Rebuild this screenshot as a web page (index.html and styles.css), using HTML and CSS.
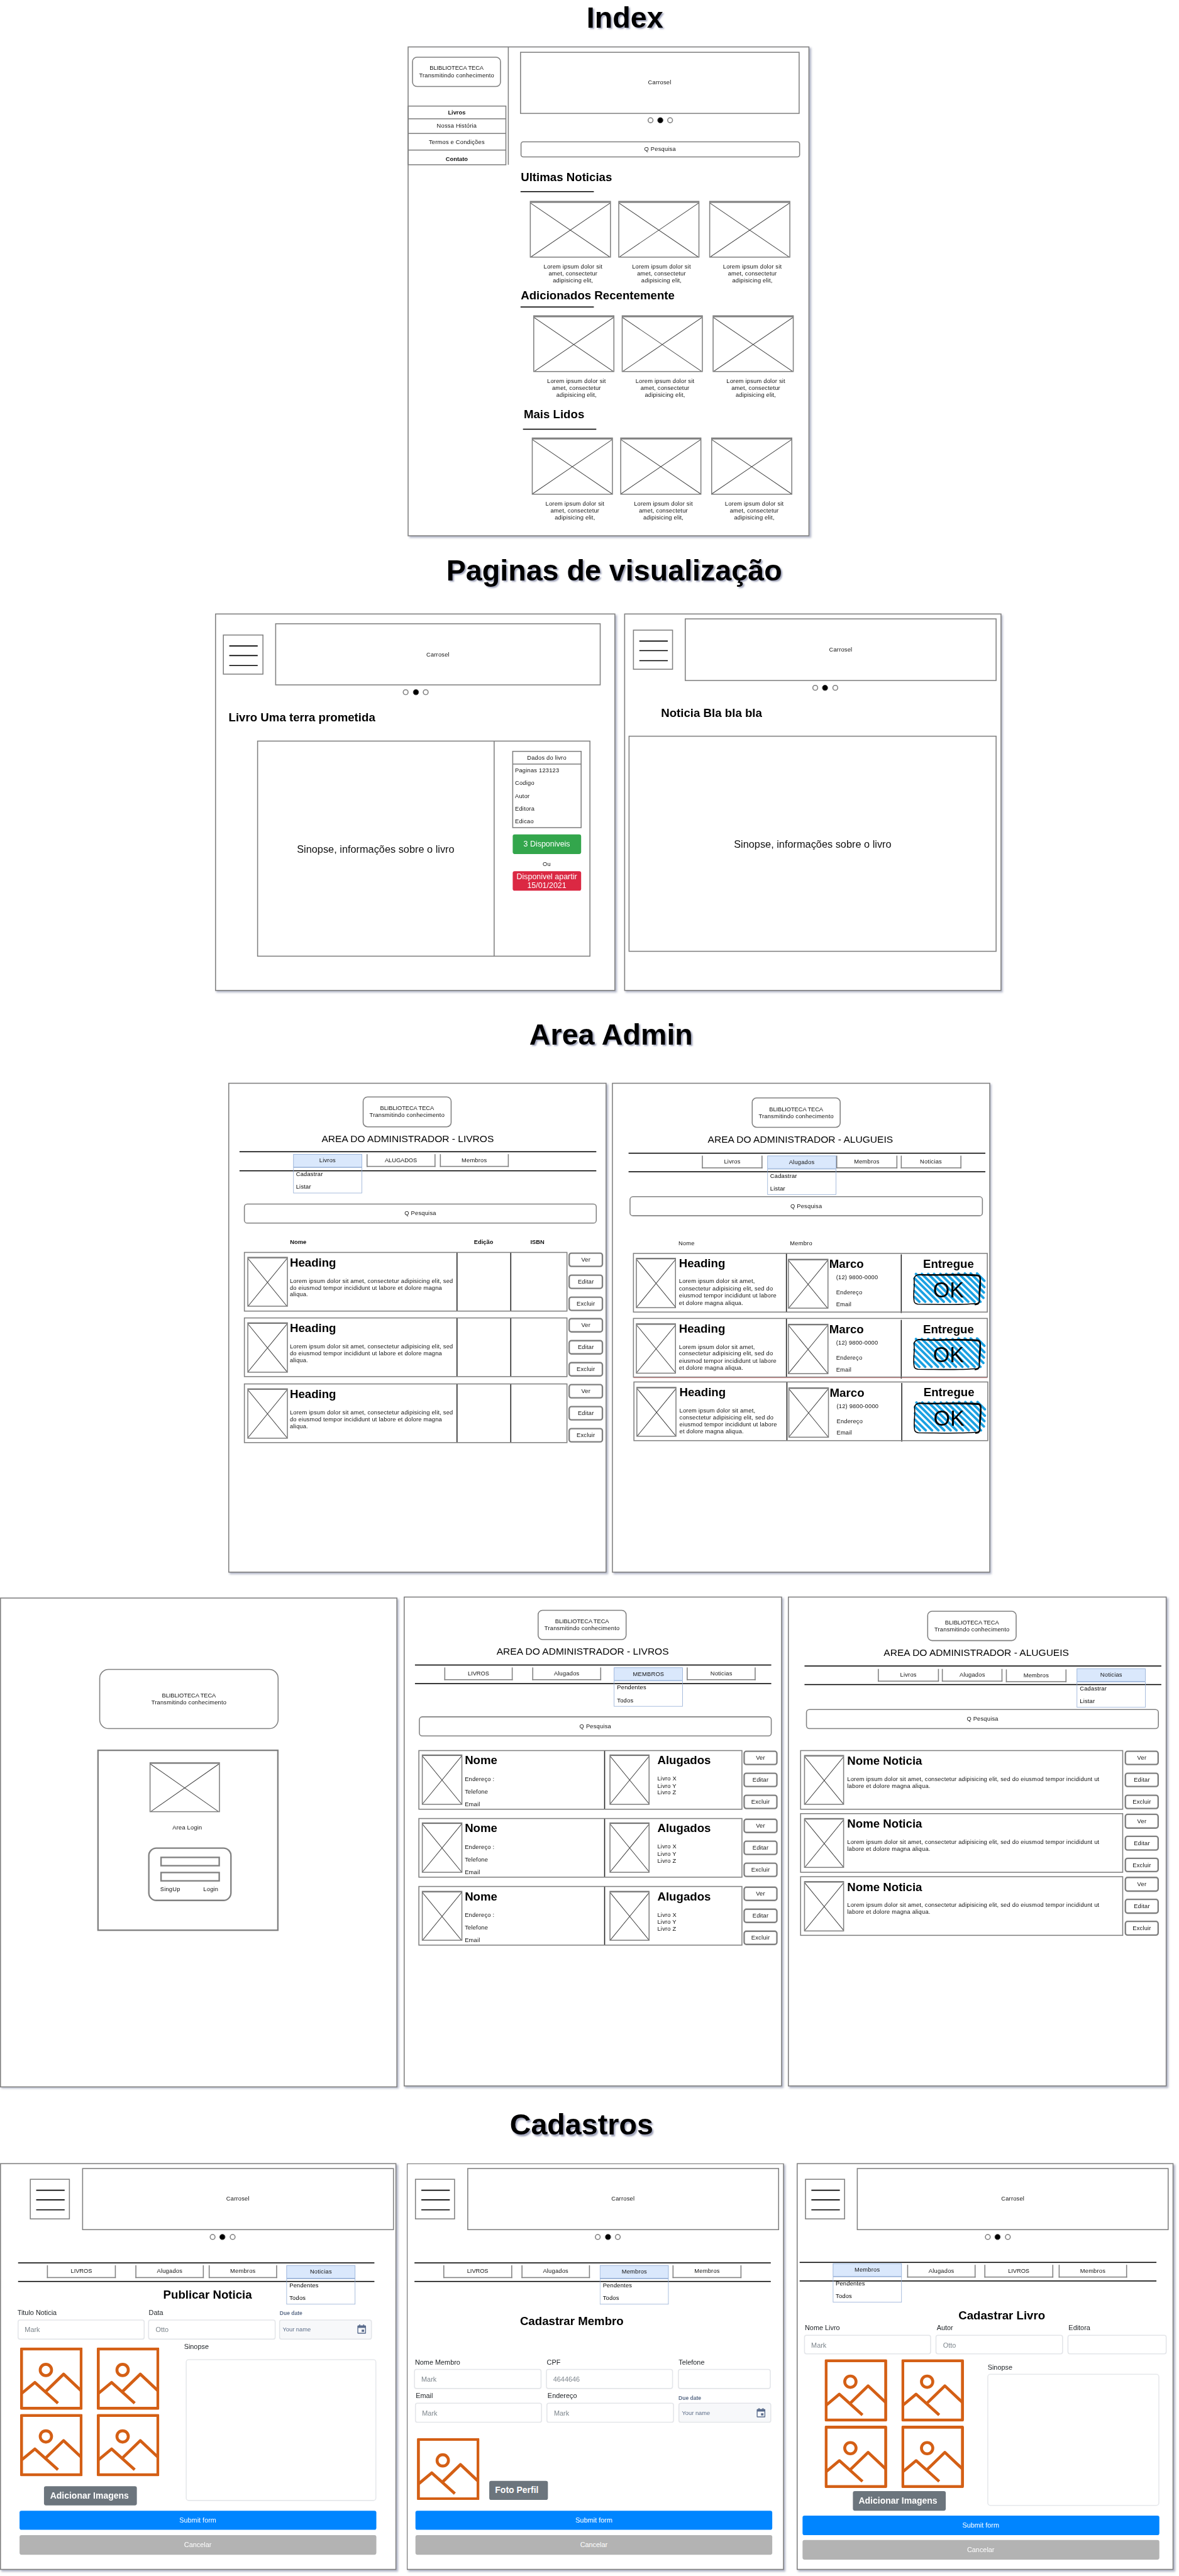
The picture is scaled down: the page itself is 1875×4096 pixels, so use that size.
FILE: index.html
```html
<!DOCTYPE html>
<html lang="pt-BR">
<head>
<meta charset="utf-8">
<title>Biblioteca Teca - Wireframes</title>
<link rel="stylesheet" href="styles.css">
</head>
<body>
<svg class="defs" aria-hidden="true">
  <symbol id="cross" viewBox="0 0 100 100" preserveAspectRatio="none"><path d="M0 0L100 100M100 0L0 100" fill="none" stroke="#444" stroke-width="1.3" vector-effect="non-scaling-stroke"/></symbol>
  <symbol id="menu" viewBox="0 0 80 80" preserveAspectRatio="none"><path d="M12 22.3H70M12 41.8H70M12 62.2H70" stroke="#000" stroke-width="2"/></symbol>
  <symbol id="photo" viewBox="0 0 128 127.5" preserveAspectRatio="none"><g fill="none" stroke="#d45f15" stroke-width="6"><rect x="3" y="3" width="122" height="121.5" stroke-linejoin="round"/><circle cx="52.8" cy="46" r="11.6"/><path d="M4 93.5L30.3 71.5L77.5 114M53 89.5L89 54.5L125 88.5" stroke-linejoin="round"/></g></symbol>
  <symbol id="calendar" viewBox="0 0 18 20"><path d="M4 0h2v2h6V0h2v2h2a2 2 0 0 1 2 2v13a2 2 0 0 1-2 2H2a2 2 0 0 1-2-2V4a2 2 0 0 1 2-2h2zM2 7v10h14V7zM9 10.5h5V15H9z" fill="#596b8c" fill-rule="evenodd"/></symbol>
  <symbol id="ok" viewBox="0 0 154 74">
    <path d="M6 52L16 62M6 40L28 62M6 27L41 62M6 14L54 62M9 5L66 62M21 5L79 62M34 5L91 62M46 5L104 62M59 5L116 62M71 5L129 62M84 5L141 62M96 4L147 54M109 4L148 43M121 4L149 32M134 4L149 19" fill="none" stroke="#1ba1e2" stroke-width="5" stroke-linecap="round"/>
    <path d="M14 6C50 8 90 4 134 7Q142 8 141 16C142 32 139 46 139 59Q138 67 128 66C92 69 50 67 13 67Q5 66 5 59C3 44 7 30 5 15Q6 7 17 6M16 7C60 9 100 6 136 9Q140 10 140 18C139 34 137 46 139 62Q137 68 130 68" fill="none" stroke="#000" stroke-width="2" stroke-linecap="round"/>
  </symbol>
</svg>
<div class="stage">
<main class="canvas">

  <h1 class="title t-index">Index</h1>
  <h1 class="title t-pages">Paginas de visualização</h1>
  <h1 class="title t-admin">Area Admin</h1>
  <h1 class="title t-forms">Cadastros</h1>

  <section class="board b-index">
    <aside class="side">
      <div class="logo"><span class="caps">BLIBLIOTECA TECA</span>Transmitindo conhecimento</div>
      <nav class="links"><b>Livros</b><span>Nossa História</span><span>Termos e Condições</span><b>Contato</b></nav>
    </aside>
    <div class="main">
      <div class="carousel">Carrosel</div>
      <div class="dots"><i></i><i class="on"></i><i></i></div>
      <div class="search">Q Pesquisa</div>
      <h2>Ultimas Noticias</h2>
      <hr>
      <div class="figs">
        <figure><svg class="cross"><use href="#cross"/></svg><figcaption>Lorem ipsum dolor sit<br>amet, consectetur<br>adipisicing elit,</figcaption></figure>
        <figure><svg class="cross"><use href="#cross"/></svg><figcaption>Lorem ipsum dolor sit<br>amet, consectetur<br>adipisicing elit,</figcaption></figure>
        <figure><svg class="cross"><use href="#cross"/></svg><figcaption>Lorem ipsum dolor sit<br>amet, consectetur<br>adipisicing elit,</figcaption></figure>
      </div>
      <h2 class="recent">Adicionados Recentemente</h2>
      <hr class="recent-rule">
      <div class="figs recent-figs">
        <figure><svg class="cross"><use href="#cross"/></svg><figcaption>Lorem ipsum dolor sit<br>amet, consectetur<br>adipisicing elit,</figcaption></figure>
        <figure><svg class="cross"><use href="#cross"/></svg><figcaption>Lorem ipsum dolor sit<br>amet, consectetur<br>adipisicing elit,</figcaption></figure>
        <figure><svg class="cross"><use href="#cross"/></svg><figcaption>Lorem ipsum dolor sit<br>amet, consectetur<br>adipisicing elit,</figcaption></figure>
      </div>
      <h2 class="popular">Mais Lidos</h2>
      <hr class="popular-rule">
      <div class="figs popular-figs">
        <figure><svg class="cross"><use href="#cross"/></svg><figcaption>Lorem ipsum dolor sit<br>amet, consectetur<br>adipisicing elit,</figcaption></figure>
        <figure><svg class="cross"><use href="#cross"/></svg><figcaption>Lorem ipsum dolor sit<br>amet, consectetur<br>adipisicing elit,</figcaption></figure>
        <figure><svg class="cross"><use href="#cross"/></svg><figcaption>Lorem ipsum dolor sit<br>amet, consectetur<br>adipisicing elit,</figcaption></figure>
      </div>
    </div>
  </section>

  <section class="board b-book">
    <header class="head"><svg class="burger"><use href="#menu"/></svg><div class="carousel">Carrosel</div></header>
    <div class="dots"><i></i><i class="on"></i><i></i></div>
    <h2>Livro Uma terra prometida</h2>
    <div class="detail">
      <div class="synopsis">Sinopse, informações sobre o livro</div>
      <aside>
        <div class="data"><p>Dados do livro</p><ul><li>Paginas 123123</li><li>Codigo</li><li>Autor</li><li>Editora</li><li>Edicao</li></ul></div>
        <div class="tag green">3 Disponiveis</div>
        <p class="or">Ou</p>
        <div class="tag red">Disponivel apartir<br>15/01/2021</div>
      </aside>
    </div>
  </section>

  <section class="board b-news">
    <header class="head"><svg class="burger"><use href="#menu"/></svg><div class="carousel">Carrosel</div></header>
    <div class="dots"><i></i><i class="on"></i><i></i></div>
    <h2>Noticia Bla bla bla</h2>
    <div class="detail"><div class="synopsis">Sinopse, informações sobre o livro</div></div>
  </section>

  <section class="board admin b-books">
    <div class="logo"><span class="caps">BLIBLIOTECA TECA</span>Transmitindo conhecimento</div>
    <p class="area">AREA DO ADMINISTRADOR - LIVROS</p>
    <nav class="tabs"><div class="tab on">Livros<ul><li>Cadastrar</li><li>Listar</li></ul></div><div class="tab caps">ALUGADOS</div><div class="tab">Membros</div></nav>
    <div class="search">Q Pesquisa</div>
    <div class="cols"><b>Nome</b><b>Edição</b><b>ISBN</b></div>
    <div class="row"><div class="card"><div class="cell"><svg class="cross"><use href="#cross"/></svg><div class="txt"><h3>Heading</h3><p>Lorem ipsum dolor sit amet, consectetur adipisicing elit, sed<br>do eiusmod tempor incididunt ut labore et dolore magna<br>aliqua.</p></div></div><div class="cell"></div><div class="cell"></div></div><div class="acts"><span>Ver</span><span>Editar</span><span>Excluir</span></div></div>
    <div class="row"><div class="card"><div class="cell"><svg class="cross"><use href="#cross"/></svg><div class="txt"><h3>Heading</h3><p>Lorem ipsum dolor sit amet, consectetur adipisicing elit, sed<br>do eiusmod tempor incididunt ut labore et dolore magna<br>aliqua.</p></div></div><div class="cell"></div><div class="cell"></div></div><div class="acts"><span>Ver</span><span>Editar</span><span>Excluir</span></div></div>
    <div class="row"><div class="card"><div class="cell"><svg class="cross"><use href="#cross"/></svg><div class="txt"><h3>Heading</h3><p>Lorem ipsum dolor sit amet, consectetur adipisicing elit, sed<br>do eiusmod tempor incididunt ut labore et dolore magna<br>aliqua.</p></div></div><div class="cell"></div><div class="cell"></div></div><div class="acts"><span>Ver</span><span>Editar</span><span>Excluir</span></div></div>
  </section>

  <section class="board admin b-rents">
    <div class="logo"><span class="caps">BLIBLIOTECA TECA</span>Transmitindo conhecimento</div>
    <p class="area">AREA DO ADMINISTRADOR - ALUGUEIS</p>
    <nav class="tabs"><div class="tab">Livros</div><div class="tab on">Alugados<ul><li>Cadastrar</li><li>Listar</li></ul></div><div class="tab">Membros</div><div class="tab">Noticias</div></nav>
    <div class="search">Q Pesquisa</div>
    <div class="cols"><span>Nome</span><span>Membro</span></div>
    <div class="row"><div class="card"><div class="cell"><svg class="cross"><use href="#cross"/></svg><div class="txt"><h3>Heading</h3><p>Lorem ipsum dolor sit amet,<br>consectetur adipisicing elit, sed do<br>eiusmod tempor incididunt ut labore<br>et dolore magna aliqua.</p></div></div><div class="cell"><svg class="cross"><use href="#cross"/></svg><div class="txt"><h3>Marco</h3><p>(12) 9800-0000</p><p>Endereço</p><p>Email</p></div></div><div class="cell"><h3>Entregue</h3><div class="okbox"><svg><use href="#ok"/></svg><span>OK</span></div></div></div></div>
    <div class="row warn"><div class="card"><div class="cell"><svg class="cross"><use href="#cross"/></svg><div class="txt"><h3>Heading</h3><p>Lorem ipsum dolor sit amet,<br>consectetur adipisicing elit, sed do<br>eiusmod tempor incididunt ut labore<br>et dolore magna aliqua.</p></div></div><div class="cell"><svg class="cross"><use href="#cross"/></svg><div class="txt"><h3>Marco</h3><p>(12) 9800-0000</p><p>Endereço</p><p>Email</p></div></div><div class="cell"><h3>Entregue</h3><div class="okbox"><svg><use href="#ok"/></svg><span>OK</span></div></div></div></div>
    <div class="row last"><div class="card"><div class="cell"><svg class="cross"><use href="#cross"/></svg><div class="txt"><h3>Heading</h3><p>Lorem ipsum dolor sit amet,<br>consectetur adipisicing elit, sed do<br>eiusmod tempor incididunt ut labore<br>et dolore magna aliqua.</p></div></div><div class="cell"><svg class="cross"><use href="#cross"/></svg><div class="txt"><h3>Marco</h3><p>(12) 9800-0000</p><p>Endereço</p><p>Email</p></div></div><div class="cell"><h3>Entregue</h3><div class="okbox"><svg><use href="#ok"/></svg><span>OK</span></div></div></div></div>
  </section>

  <section class="board b-login">
    <div class="logo"><span class="caps">BLIBLIOTECA TECA</span>Transmitindo conhecimento</div>
    <div class="loginbox">
      <svg class="cross"><use href="#cross"/></svg>
      <p>Area Login</p>
      <div class="form"><div class="line"></div><div class="line"></div><div class="foot"><span>SingUp</span><span>Login</span></div></div>
    </div>
  </section>

  <section class="board admin b-members">
    <div class="logo"><span class="caps">BLIBLIOTECA TECA</span>Transmitindo conhecimento</div>
    <p class="area">AREA DO ADMINISTRADOR - LIVROS</p>
    <nav class="tabs"><div class="tab caps">LIVROS</div><div class="tab">Alugados</div><div class="tab on">MEMBROS<ul><li>Pendentes</li><li>Todos</li></ul></div><div class="tab">Noticias</div></nav>
    <div class="search">Q Pesquisa</div>
    <div class="row"><div class="card"><div class="cell"><svg class="cross"><use href="#cross"/></svg><div class="txt"><h3>Nome</h3><p>Endereço :<br>Telefone<br>Email</p></div></div><div class="cell"><svg class="cross"><use href="#cross"/></svg><div class="txt"><h3>Alugados</h3><p>Livro X<br>Livro Y<br>Livro Z</p></div></div></div><div class="acts"><span>Ver</span><span>Editar</span><span>Excluir</span></div></div>
    <div class="row"><div class="card"><div class="cell"><svg class="cross"><use href="#cross"/></svg><div class="txt"><h3>Nome</h3><p>Endereço :<br>Telefone<br>Email</p></div></div><div class="cell"><svg class="cross"><use href="#cross"/></svg><div class="txt"><h3>Alugados</h3><p>Livro X<br>Livro Y<br>Livro Z</p></div></div></div><div class="acts"><span>Ver</span><span>Editar</span><span>Excluir</span></div></div>
    <div class="row"><div class="card"><div class="cell"><svg class="cross"><use href="#cross"/></svg><div class="txt"><h3>Nome</h3><p>Endereço :<br>Telefone<br>Email</p></div></div><div class="cell"><svg class="cross"><use href="#cross"/></svg><div class="txt"><h3>Alugados</h3><p>Livro X<br>Livro Y<br>Livro Z</p></div></div></div><div class="acts"><span>Ver</span><span>Editar</span><span>Excluir</span></div></div>
  </section>

  <section class="board admin b-posts">
    <div class="logo"><span class="caps">BLIBLIOTECA TECA</span>Transmitindo conhecimento</div>
    <p class="area">AREA DO ADMINISTRADOR - ALUGUEIS</p>
    <nav class="tabs"><div class="tab">Livros</div><div class="tab">Alugados</div><div class="tab">Membros</div><div class="tab on">Noticias<ul><li>Cadastrar</li><li>Listar</li></ul></div></nav>
    <div class="search">Q Pesquisa</div>
    <div class="row"><div class="card"><div class="cell"><svg class="cross"><use href="#cross"/></svg><div class="txt"><h3>Nome Noticia</h3><p>Lorem ipsum dolor sit amet, consectetur adipisicing elit, sed do eiusmod tempor incididunt ut<br>labore et dolore magna aliqua.</p></div></div></div><div class="acts"><span>Ver</span><span>Editar</span><span>Excluir</span></div></div>
    <div class="row"><div class="card"><div class="cell"><svg class="cross"><use href="#cross"/></svg><div class="txt"><h3>Nome Noticia</h3><p>Lorem ipsum dolor sit amet, consectetur adipisicing elit, sed do eiusmod tempor incididunt ut<br>labore et dolore magna aliqua.</p></div></div></div><div class="acts"><span>Ver</span><span>Editar</span><span>Excluir</span></div></div>
    <div class="row"><div class="card"><div class="cell"><svg class="cross"><use href="#cross"/></svg><div class="txt"><h3>Nome Noticia</h3><p>Lorem ipsum dolor sit amet, consectetur adipisicing elit, sed do eiusmod tempor incididunt ut<br>labore et dolore magna aliqua.</p></div></div></div><div class="acts"><span>Ver</span><span>Editar</span><span>Excluir</span></div></div>
  </section>

  <section class="board entry b-addnews">
    <header class="head"><svg class="burger"><use href="#menu"/></svg><div class="carousel">Carrosel</div></header>
    <div class="dots"><i></i><i class="on"></i><i></i></div>
    <nav class="tabs"><div class="tab caps">LIVROS</div><div class="tab">Alugados</div><div class="tab">Membros</div><div class="tab on">Noticias<ul><li>Pendentes</li><li>Todos</li></ul></div></nav>
    <h2>Publicar Noticia</h2>
    <div class="fields">
      <div class="field"><label>Titulo Noticia</label><div class="input">Mark</div></div>
      <div class="field"><label>Data</label><div class="input">Otto</div></div>
      <div class="field date"><label>Due date</label><div class="input">Your name<svg><use href="#calendar"/></svg></div></div>
    </div>
    <div class="compose">
      <div class="gallery"><svg><use href="#photo"/></svg><svg><use href="#photo"/></svg><svg><use href="#photo"/></svg><svg><use href="#photo"/></svg><div class="upload">Adicionar Imagens</div></div>
      <div class="body"><label>Sinopse</label><div class="area-input"></div></div>
    </div>
    <div class="btn submit">Submit form</div>
    <div class="btn cancel">Cancelar</div>
  </section>

  <section class="board entry b-addmember">
    <header class="head"><svg class="burger"><use href="#menu"/></svg><div class="carousel">Carrosel</div></header>
    <div class="dots"><i></i><i class="on"></i><i></i></div>
    <nav class="tabs"><div class="tab caps">LIVROS</div><div class="tab">Alugados</div><div class="tab on">Membros<ul><li>Pendentes</li><li>Todos</li></ul></div><div class="tab">Membros</div></nav>
    <h2>Cadastrar Membro</h2>
    <div class="fields">
      <div class="field"><label>Nome Membro</label><div class="input">Mark</div></div>
      <div class="field"><label>CPF</label><div class="input">4644646</div></div>
      <div class="field"><label>Telefone</label><div class="input"></div></div>
    </div>
    <div class="fields second">
      <div class="field"><label>Email</label><div class="input">Mark</div></div>
      <div class="field"><label>Endereço</label><div class="input">Mark</div></div>
      <div class="field date"><label>Due date</label><div class="input">Your name<svg><use href="#calendar"/></svg></div></div>
    </div>
    <div class="profile"><svg><use href="#photo"/></svg><div class="upload">Foto Perfil</div></div>
    <div class="btn submit">Submit form</div>
    <div class="btn cancel">Cancelar</div>
  </section>

  <section class="board entry b-addbook">
    <header class="head"><svg class="burger"><use href="#menu"/></svg><div class="carousel">Carrosel</div></header>
    <div class="dots"><i></i><i class="on"></i><i></i></div>
    <nav class="tabs"><div class="tab on">Membros<ul><li>Pendentes</li><li>Todos</li></ul></div><div class="tab">Alugados</div><div class="tab caps">LIVROS</div><div class="tab">Membros</div></nav>
    <h2>Cadastrar Livro</h2>
    <div class="fields">
      <div class="field"><label>Nome Livro</label><div class="input">Mark</div></div>
      <div class="field"><label>Autor</label><div class="input">Otto</div></div>
      <div class="field"><label>Editora</label><div class="input"></div></div>
    </div>
    <div class="compose">
      <div class="gallery"><svg><use href="#photo"/></svg><svg><use href="#photo"/></svg><svg><use href="#photo"/></svg><svg><use href="#photo"/></svg><div class="upload">Adicionar Imagens</div></div>
      <div class="body"><label>Sinopse</label><div class="area-input"></div></div>
    </div>
    <div class="btn submit">Submit form</div>
    <div class="btn cancel">Cancelar</div>
  </section>
</main>
</div>
</body>
</html>
```

FILE: styles.css
```css
* { box-sizing: border-box; margin: 0; padding: 0; }
body { font: 12px/14.4px "Liberation Sans", Arial, sans-serif; letter-spacing: .27px; color: #111; background: #fff; }
ul { list-style: none; }
label { display: block; }
svg { display: block; flex: none; }
.defs { position: absolute; width: 0; height: 0; }

/* drawing canvas: 2412 x 5268 units shown at 77.7% */
.stage { width: 1875px; height: 4096px; overflow: hidden; }
.canvas { position: relative; width: 2412px; height: 5268px; overflow: hidden; transform: scale(.7773); transform-origin: 0 0; white-space: nowrap; }

.title { position: absolute; font-size: 60px; line-height: 72px; font-weight: bold; letter-spacing: 0; color: #000; text-shadow: 3px 3px 3px rgba(61,69,116,.5); }
.t-index { left: 1200px; top: 0; }
.t-pages { left: 913px; top: 1131px; }
.t-admin { left: 1083px; top: 2081px; }
.t-forms { left: 1043px; top: 4311px; }

/* artboards */
.board { position: absolute; background: #fff; display: flex; flex-direction: column; align-items: flex-start; box-shadow: 3px 3px 4px 1px rgba(61,69,116,.4); }
.board > * { flex: none; }
.board, .logo, .carousel, .dots i, .search, .burger, .detail, .data, .card, .cross { outline: 2px solid #808080; outline-offset: -1px; }
.b-index { left: 834.5px; top: 96px; width: 820px; height: 1000px; flex-direction: row; }
.b-book { left: 440.7px; top: 1256px; width: 817px; height: 770px; }
.b-news { left: 1278.4px; top: 1256px; width: 769.4px; height: 770px; }
.b-books { left: 468px; top: 2216px; width: 772.4px; height: 1000px; }
.b-rents { left: 1253px; top: 2216px; width: 772.4px; height: 1000px; }
.b-login { left: 1px; top: 3269px; width: 811px; height: 1000px; }
.b-members { left: 826.5px; top: 3266.7px; width: 772px; height: 1000px; }
.b-posts { left: 1613.2px; top: 3266.5px; width: 772.4px; height: 1000px; }
.b-addnews { left: 1px; top: 4426px; width: 809px; height: 830px; }
.b-addmember { left: 833.3px; top: 4426px; width: 769.7px; height: 830px; }
.b-addbook { left: 1630.9px; top: 4426px; width: 769.4px; height: 830px; }

/* shared shapes */
.logo { width: 180.4px; height: 60.3px; border-radius: 9px; display: flex; flex-direction: column; align-items: center; justify-content: center; }
.caps { letter-spacing: -.1px; }
.carousel { width: 636px; height: 125.2px; display: flex; align-items: center; justify-content: center; }
.search { display: flex; align-items: center; justify-content: center; border-radius: 6px; }
.dots { display: flex; gap: 10.4px; margin-top: 10px; }
.dots i { width: 10px; height: 10px; border-radius: 50%; }
.dots .on { background: #000; outline-color: #000; outline-width: 1px; outline-offset: -.5px; }
h2, h3 { font-size: 24px; line-height: 29px; font-weight: bold; letter-spacing: 0; color: #000; }
b { letter-spacing: 0; }
.cross { border-top: 2px solid #666; }
.burger { width: 80.3px; height: 80.4px; }
.head { display: flex; align-items: center; }

/* index */
.side { width: 206px; border-right: 2px solid #808080; }
.side .logo { margin: 20.5px 0 0 9.5px; }
.links { width: 200px; margin-top: 40px; display: grid; grid-template-rows: 26px 30px 34px 30px; outline: 2px solid #808080; outline-offset: -1px; text-align: center; }
.links > * { line-height: 27px; }
.links > * + * { border-top: 2px solid #808080; line-height: 26px; margin-top: -1px; }
.links :nth-child(3) { line-height: 33px; }
.links :nth-child(4) { line-height: 35px; }
.main { padding-left: 24px; }
.main .carousel { width: 570.3px; margin-top: 10.5px; }
.main .dots { margin: 9.6px 0 0 261px; }
.main .search { width: 570px; height: 30.3px; margin: 39px 0 0 1px; border-radius: 4.5px; }
.main h2 { margin: 26px 0 0 1px; }
.main hr { width: 150px; height: 2px; border: 0; background: #000; margin-top: 15.5px; }
.figs { display: flex; margin: 18.5px 0 0 20.5px; }
figure + figure { margin-left: 17.2px; }
figure + figure + figure { margin-left: 22.2px; }
figure .cross { width: 163.8px; height: 114.5px; border-top: 3px solid #808080; }
figcaption { margin: 12px 0 0 11px; text-align: center; }
.main .recent { margin-top: 8.4px; }
.main .recent-rule { margin-top: 8.4px; }
.recent-figs { margin: 16.8px 0 0 27.6px; }
.main .popular { margin: 17.2px 0 0 7px; }
.main .popular-rule { margin: 15.7px 0 0 5px; }
.popular-figs { margin: 16.8px 0 0 24.4px; }

/* detail pages */
.b-book .head { margin: 20.3px 0 0 16.6px; gap: 26.8px; }
.b-book .carousel { width: 663.2px; }
.b-book .dots, .b-news .dots { margin-left: 384.5px; }
.b-book h2 { margin: 31.5px 0 0 27px; }
.b-news .head { margin: 10.4px 0 0 17.3px; gap: 26px; }
.b-news h2 { margin: 32px 0 0 74px; }
.detail { width: 680px; height: 440px; display: flex; margin: 34.5px 0 0 86.8px; }
.b-news .detail { width: 750.5px; margin: 33.5px 0 0 9px; }
.synopsis { flex: 1; display: flex; align-items: center; justify-content: center; font-size: 21px; letter-spacing: 0; padding-top: 2px; }
.b-book .synopsis { flex: none; width: 484.2px; border-right: 2px solid #808080; }
.detail aside { margin: 20.2px 0 0 37px; width: 140px; text-align: center; }
.data p { line-height: 27px; border-bottom: 2px solid #808080; height: 27px; }
.data li { height: 26px; line-height: 25.5px; padding-left: 5px; text-align: left; }
.data { height: 156.2px; }
.tag { height: 39.8px; border-radius: 4px; color: #fff; font-size: 16px; line-height: 19.2px; letter-spacing: 0; display: flex; align-items: center; justify-content: center; }
.green { background: #33a64c; margin-top: 14px; }
.red { background: #db2843; }
.or { margin: 13px 0 7.8px; }

/* tab bars */
.tabs { display: flex; align-items: flex-start; width: 729.8px; height: 40px; border-top: 2px solid #000; border-bottom: 2px solid #000; padding-top: 4.3px; }
.tab { width: 140.6px; height: 26px; border: 2px solid #808080; border-top: 0; text-align: center; line-height: 25px; flex: none; }
.tab.on { position: relative; width: 141px; height: 27px; background: #dae8fc; border: 1.5px solid #90abd4; line-height: 25px; }
.tab ul { position: absolute; left: -1px; right: -1px; top: 26px; height: 53px; border: 1.5px solid #90abd4; text-align: left; padding-left: 5px; color: #000; }
.tab li { height: 26px; line-height: 26px; }

/* admin boards */
.area { font-size: 20px; line-height: 24px; letter-spacing: 0; color: #000; }
.admin .search { width: 720.5px; height: 39px; }
.card { display: flex; height: 120px; }
.cell { display: flex; align-items: flex-start; height: 120px; }
.cell + .cell { border-left: 2px solid #222; }
.cell .cross { width: 80.6px; height: 100.6px; }
.row { display: flex; }
.acts { display: flex; flex-direction: column; gap: 14.7px; }
.acts span { width: 70.5px; height: 30.3px; border: 3.5px solid #808080; border-radius: 6px; text-align: center; line-height: 24px; }

.b-books .logo { margin: 28.3px 0 0 274.6px; }
.b-books .area { margin: 12px 0 14.5px 190px; }
.b-books .tabs { margin-left: 22.2px; height: 40.5px; }
.b-books .tab:nth-child(1) { margin-left: 109.4px; }
.b-books .tab + .tab { margin-left: 9.4px; }
.b-books .search { margin: 67.3px 0 0 31.8px; }
.cols { display: flex; }
.b-books .cols { margin: 32.5px 0 12.8px 125.5px; }
.b-books .cols b { width: 110px; text-align: center; }
.b-books .cols b:first-child { width: 341px; text-align: left; }
.b-books .row { margin: 0 0 14.3px 31.8px; }
.b-books .card { width: 660px; }
.b-books .cell:nth-child(1) { width: 434.5px; }
.b-books .cell:nth-child(2) { width: 110px; }
.b-books .cross { margin: 10.3px 5px 0 7.6px; }
.b-books h3 { margin: 6px 0 16px; }
.b-books .acts { margin-left: 3.6px; }

.b-rents .logo { margin: 30px 0 0 285.7px; }
.b-rents .area { margin: 12px 0 15.4px 195px; }
.b-rents .tabs { margin-left: 32.8px; }
.b-rents .tab { width: 124.4px; margin-left: 7px; }
.b-rents .tab:nth-child(1) { margin-left: 150.2px; }
.b-rents .tab:nth-child(2) { width: 141px; margin-left: 9.4px; }
.b-rents .tab:nth-child(3) { margin-left: .4px; }
.b-rents .search { margin: 50px 0 0 36.3px; }
.b-rents .cols { margin: 49.4px 0 13.1px 135px; }
.b-rents .cols span { width: 228.3px; }
.b-rents .row { margin: 0 0 13.7px 43px; }
.b-rents .warn { margin-bottom: 9.8px; box-shadow: 0 2px 0 #e88; }
.b-rents .last { margin-left: 44px; }
.b-rents .card { width: 724px; }
.b-rents .cell:nth-child(1) { width: 311.6px; }
.b-rents .cell:nth-child(1) .cross { margin: 10.8px 7px 0 5.5px; }
.b-rents .cell:nth-child(1) h3 { margin: 5.6px 0 16.2px; }
.b-rents .cell:nth-child(2) { width: 235.5px; }
.b-rents .cell:nth-child(2) .cross { margin: 12px 3px 0 3.5px; }
.b-rents .cell:nth-child(2) h3 { margin: 6.7px 0 7px; }
.b-rents .cell:nth-child(2) p { margin: 0 0 15.4px 14px; }
.b-rents .cell:nth-child(2) p:nth-of-type(2) { margin-bottom: 10.4px; }
.b-rents .cell:nth-child(3) { display: block; margin-top: 2.3px; width: 177px; }
.b-rents .cell:nth-child(3) h3 { margin: 4px 0 0 43.5px; }
.okbox { display: grid; margin: 1.7px 0 0 20px; width: 154px; height: 74px; }
.okbox svg { width: 154px; height: 74px; grid-area: 1 / 1; }
.okbox span { grid-area: 1 / 1; font-size: 44px; line-height: 75px; letter-spacing: 0; text-align: center; padding-right: 3px; color: #000; }

.b-members .logo { margin: 27.3px 0 0 274.1px; }
.b-members .area { margin: 11.3px 0 15.4px 189.5px; }
.b-members .tabs { margin-left: 22.2px; }
.b-members .tab:nth-child(1) { margin-left: 60px; }
.b-members .tab:nth-child(2) { margin-left: 39.8px; }
.b-members .tab:nth-child(3) { margin-left: 26.8px; }
.b-members .tab:nth-child(4) { margin-left: 8px; }
.b-members .search { margin: 66.7px 0 30px 31.3px; }
.b-members .row { margin: 0 0 18.9px 30.8px; }
.b-members .card { width: 660.5px; }
.b-members .cell:nth-child(1) { width: 378.6px; }
.b-members .cross { margin: 9.6px 6px 0 7px; }
.b-members .cell + .cell .cross { margin: 9.6px 16.5px 0 10px; }
.b-members h3 { margin: 5.6px 0 10.3px; }
.b-members .cell:first-child p { line-height: 26px; }
.b-members .cell + .cell p { padding-top: 5.7px; }
.b-members .acts { margin-left: 3px; }

.b-posts .logo { margin: 29.5px 0 0 285.2px; }
.b-posts .area { margin: 11.4px 0 15.3px 194.8px; }
.b-posts .tabs { margin-left: 33.1px; }
.b-posts .tab { width: 124.4px; margin: .8px 0 0 6.4px; }
.b-posts .tab:nth-child(1) { margin-left: 150px; }
.b-posts .tab:nth-child(3) { margin-top: 1.8px; }
.b-posts .tab:nth-child(4) { width: 140.8px; margin: -.4px 0 0 21px; }
.b-posts .search { margin: 50.2px 0 44.9px 36.8px; }
.b-posts .row { margin: 0 0 8.9px 24.5px; }
.b-posts .card { width: 659.6px; }
.b-posts .cross { margin: 9.6px 7px 0 8px; }
.b-posts h3 { margin: 5.6px 0 16px; }
.b-posts .acts { margin-left: 3.7px; }

/* login */
.b-login .logo { width: 365px; height: 121.7px; margin: 145.8px 0 0 203px; border-radius: 18px; }
.loginbox { width: 371px; height: 371px; margin: 42.2px 0 0 197.7px; border: 3.5px solid #808080; padding: 24px 0 0 101.5px; }
.loginbox .cross { width: 141.5px; height: 100.8px; margin-left: 4px; }
.loginbox p { width: 160px; text-align: center; margin: 24.7px 0 33px; }
.form { width: 171px; height: 110.5px; border: 3.5px solid #808080; border-radius: 17px; padding: 16px 21.5px 0; }
.line { height: 20.6px; border: 3.5px solid #808080; margin-bottom: 10.4px; }
.form .foot { display: flex; justify-content: space-between; margin-top: -2.6px; padding: 0 3px 0 0; }

/* entry forms */
.entry .head { margin: 10px 0 0 16.8px; gap: 26.2px; }
.entry .dots { margin-left: 385px; }
.entry .tabs { margin-top: 47px; }
.entry label { font-size: 14px; line-height: 16.8px; letter-spacing: 0; color: #212529; }
.fields { display: flex; }
.field { width: 260.6px; margin-right: 9.2px; }
.field label { padding-left: 2px; }
.input { height: 41px; margin-top: 5px; border: 2px solid #e3e5e9; border-radius: 5px; padding-left: 13px; font-size: 14px; line-height: 38px; letter-spacing: 0; color: #7d858c; }
.field.date { width: 190px; margin-right: 0; }
.entry .date label { font-size: 11px; padding-left: 0; color: #5f6f8a; font-weight: bold; }
.date .input { display: flex; align-items: center; justify-content: space-between; background: #f7f8fa; padding: 0 10px 0 5px; font-size: 12px; color: #5f6f8a; }
.date .input svg { width: 18px; height: 20px; }
.area-input { border: 2px solid #e6e8eb; border-radius: 6px; }
.compose { display: flex; align-items: flex-start; }
.gallery { display: grid; grid-template: 127.6px 127.6px auto / 128.2px 128.2px; gap: 8.5px 28.8px; }
.gallery svg, .profile svg { width: 128.2px; height: 127.6px; }
.upload { width: 190px; height: 39.3px; border-radius: 4px; background: #6c757d; color: #fff; font-size: 18px; font-weight: bold; line-height: 39px; letter-spacing: 0; padding-left: 12px; }
.gallery .upload { grid-column: 1 / 3; }
.btn { width: 730px; height: 39.5px; border-radius: 4px; color: #fff; font-size: 14px; line-height: 39px; letter-spacing: 0; text-align: center; }
.submit { background: #0085ff; }
.cancel { background: #b3b3b3; margin-top: 11px; }

.b-addnews .head { margin-left: 61.2px; }
.b-addnews .dots { margin-left: 429px; }
.b-addnews .tabs { margin-left: 35.6px; }
.b-addnews .tab:nth-child(1) { margin-left: 59.6px; }
.b-addnews .tab:nth-child(2) { margin-left: 40px; }
.b-addnews .tab:nth-child(3) { margin-left: 9.3px; }
.b-addnews .tab:nth-child(4) { margin-left: 18.8px; }
.b-addnews h2 { margin: 10.7px 0 15.2px 333px; }
.b-addnews .fields { margin-left: 34.6px; }
.b-addnews .field { margin-right: 7.2px; }
.b-addnews .field label { padding-left: 0; }
.b-addnews .field + .field label { padding-left: 1px; }
.b-addnews .date { margin-right: 0; }
.b-addnews .gallery { margin: 16.2px 0 0 40.3px; }
.b-addnews .upload { margin: 11.5px 0 0 49.2px; }
.b-addnews .body { margin: 6.5px 0 0 50px; }
.b-addnews .area-input { width: 389.6px; height: 290.4px; margin: 16.4px 0 0 4px; }
.b-addnews .btn { margin-left: 38.7px; }
.b-addnews .submit { margin-top: 10.6px; }

.b-addmember .tabs { margin-left: 14.3px; }
.b-addmember .tab:nth-child(1) { margin-left: 59.4px; }
.b-addmember .tab:nth-child(2) { margin-left: 19px; }
.b-addmember .tab:nth-child(3) { margin-left: 20.2px; }
.b-addmember .tab:nth-child(4) { margin-left: 8px; }
.b-addmember h2 { margin: 64.4px 0 62.5px 230.5px; }
.b-addmember .fields { margin-left: 13.7px; }
.b-addmember .field:nth-child(3) { width: 190.3px; margin-right: 0; }
.b-addmember .second { margin: 6.5px 0 0 15.3px; }
.b-addmember .date label { padding-top: 4px; height: 16.8px; line-height: 17px; }
.profile { display: flex; align-items: flex-end; gap: 20px; margin: 30.4px 0 21.4px 19.4px; }
.profile .upload { width: 120px; }
.b-addmember .btn { margin-left: 16.7px; }

.b-addbook .tabs { margin: 45.7px 0 0 5.6px; }
.b-addbook .tab { margin-left: 11px; }
.b-addbook .tab:nth-child(1) { margin: -3.5px 0 0 67.3px; }
.b-addbook .tab:nth-child(3) { margin-left: 17.6px; }
.b-addbook h2 { margin: 54.5px 0 3.9px 330px; }
.b-addbook .fields { margin-left: 13.8px; }
.b-addbook .field:nth-child(3) { width: 203px; margin-right: 0; }
.b-addbook .input { height: 40px; }
.b-addbook .gallery { margin: 10px 0 0 56.6px; }
.b-addbook .upload { margin: -2px 0 0 57.2px; }
.b-addbook .body { margin: 18px 0 0 47px; }
.b-addbook .body label { padding-left: 1px; }
.b-addbook .area-input { width: 352.4px; height: 270.4px; margin-top: 5.2px; }
.b-addbook .btn { margin-left: 10.7px; }
.b-addbook .submit { margin-top: 10.6px; }
.b-addbook .cancel { margin-top: 10.4px; }
```
